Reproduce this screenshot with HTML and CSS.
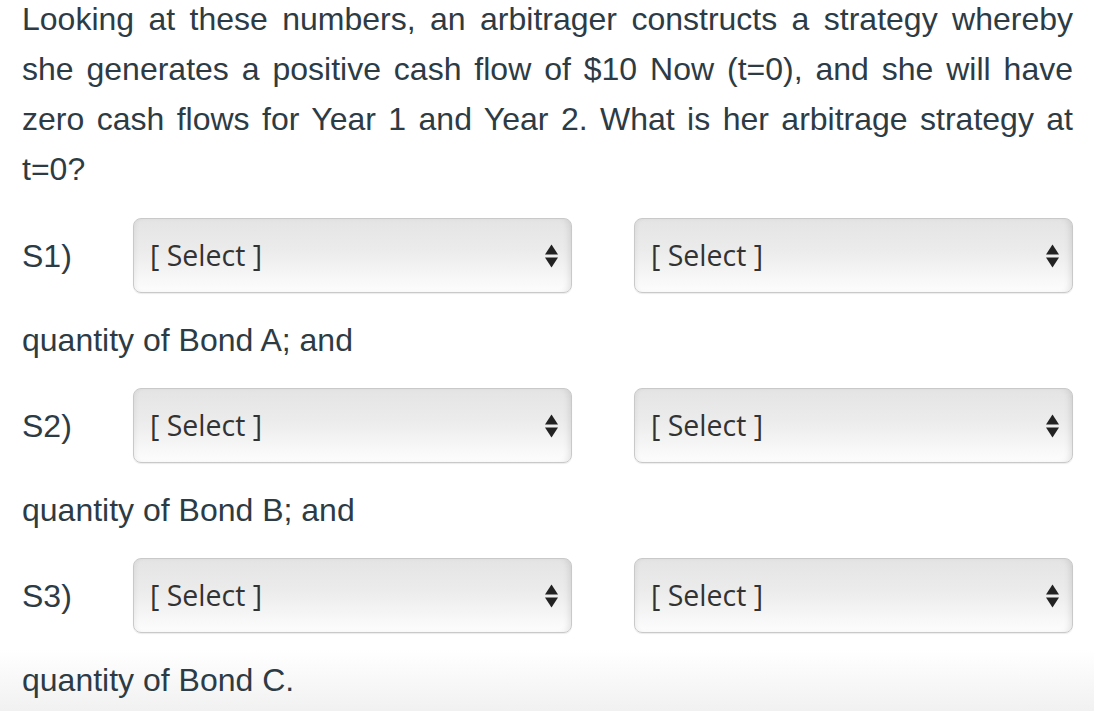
FILE: index.html
```html
<!DOCTYPE html>
<html>
<head>
<meta charset="utf-8">
<link rel="stylesheet" href="styles.css">
</head>
<body>
<div class="page">
  <p class="question">Looking at these numbers, an arbitrager constructs a strategy whereby she generates a positive cash flow of $10 Now (t=0), and she will have zero cash flows for Year 1 and Year 2. What is her arbitrage strategy at t=0?</p>

  <div class="row">
    <span class="label">S1)</span>
    <div class="select"><span class="select-text">[ Select ]</span><span class="arrows"><svg width="13" height="24" viewBox="0 0 13 24"><path d="M6.5 0.5 L13 10.5 L0 10.5 Z" fill="#222"/><path d="M0 13.5 L13 13.5 L6.5 23.5 Z" fill="#222"/></svg></span></div>
    <div class="select"><span class="select-text">[ Select ]</span><span class="arrows"><svg width="13" height="24" viewBox="0 0 13 24"><path d="M6.5 0.5 L13 10.5 L0 10.5 Z" fill="#222"/><path d="M0 13.5 L13 13.5 L6.5 23.5 Z" fill="#222"/></svg></span></div>
  </div>
  <p class="line">quantity of Bond A; and</p>

  <div class="row">
    <span class="label">S2)</span>
    <div class="select"><span class="select-text">[ Select ]</span><span class="arrows"><svg width="13" height="24" viewBox="0 0 13 24"><path d="M6.5 0.5 L13 10.5 L0 10.5 Z" fill="#222"/><path d="M0 13.5 L13 13.5 L6.5 23.5 Z" fill="#222"/></svg></span></div>
    <div class="select"><span class="select-text">[ Select ]</span><span class="arrows"><svg width="13" height="24" viewBox="0 0 13 24"><path d="M6.5 0.5 L13 10.5 L0 10.5 Z" fill="#222"/><path d="M0 13.5 L13 13.5 L6.5 23.5 Z" fill="#222"/></svg></span></div>
  </div>
  <p class="line">quantity of Bond B; and</p>

  <div class="row">
    <span class="label">S3)</span>
    <div class="select"><span class="select-text">[ Select ]</span><span class="arrows"><svg width="13" height="24" viewBox="0 0 13 24"><path d="M6.5 0.5 L13 10.5 L0 10.5 Z" fill="#222"/><path d="M0 13.5 L13 13.5 L6.5 23.5 Z" fill="#222"/></svg></span></div>
    <div class="select"><span class="select-text">[ Select ]</span><span class="arrows"><svg width="13" height="24" viewBox="0 0 13 24"><path d="M6.5 0.5 L13 10.5 L0 10.5 Z" fill="#222"/><path d="M0 13.5 L13 13.5 L6.5 23.5 Z" fill="#222"/></svg></span></div>
  </div>
  <p class="line">quantity of Bond C.</p>
</div>
</body>
</html>
```

FILE: styles.css
```css
html, body {
  margin: 0;
  padding: 0;
}
body {
  min-height: 711px;
  background: linear-gradient(to bottom, #ffffff 0, #ffffff 650px, #f1f1f1 711px);
  color: #2d3b45;
  font-family: "Liberation Sans", Arial, sans-serif;
  font-size: 32px;
}
.page {
  padding: 0 21px 0 22px;
  overflow: hidden;
}
.question {
  margin: -6px 0 0 0;
  line-height: 50px;
  text-align: justify;
}
.row {
  display: flex;
  align-items: center;
  margin-top: 24px;
  height: 75px;
}
.line + .row {
  margin-top: 23px;
}
.label {
  width: 111px;
  flex: none;
  margin-top: 2px;
}
.select {
  box-sizing: border-box;
  width: 439px;
  height: 75px;
  flex: none;
  display: flex;
  align-items: center;
  justify-content: space-between;
  padding: 0 13px 0 16px;
  border: 1px solid #c9c9c9;
  border-radius: 8px;
  background: linear-gradient(to bottom, #e4e4e4 0%, #ececec 45%, #fdfdfd 100%);
  box-shadow: inset -5px 0 6px -3px rgba(0,0,0,0.10), inset 4px 0 5px -3px rgba(0,0,0,0.06), 0 1px 1px rgba(0,0,0,0.08);
}
.select + .select {
  margin-left: 62px;
}
.select-text {
  font-family: "Open Sans", sans-serif;
  font-size: 28.5px;
  color: #333;
  margin-top: -2px;
}
.arrows {
  display: flex;
  align-items: center;
}
.arrows svg {
  display: block;
}
.line {
  margin: 22px 0 0 0;
  line-height: 50px;
}
```
